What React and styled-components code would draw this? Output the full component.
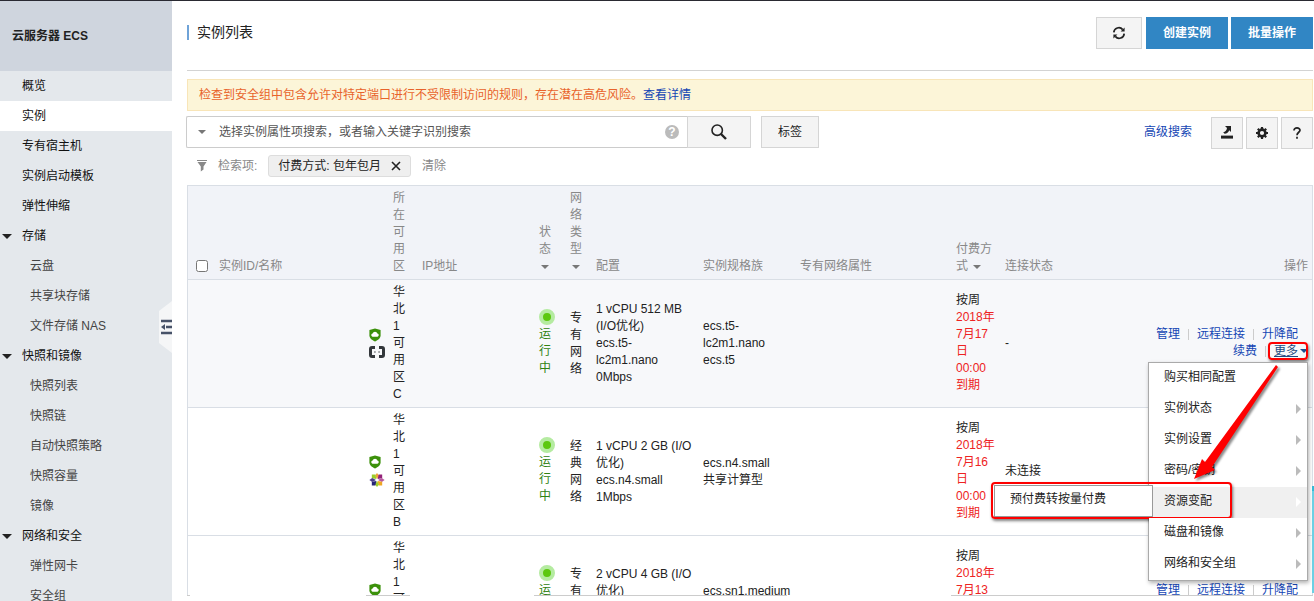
import React from 'react'
import styled, { createGlobalStyle } from 'styled-components'

const menu = [
    { label: '概览' },
    { label: '实例', active: true },
    { label: '专有宿主机' },
    { label: '实例启动模板' },
    { label: '弹性伸缩' },
    { label: '存储', group: true },
    { label: '云盘', sub: true },
    { label: '共享块存储', sub: true },
    { label: '文件存储 NAS', sub: true },
    { label: '快照和镜像', group: true },
    { label: '快照列表', sub: true },
    { label: '快照链', sub: true },
    { label: '自动快照策略', sub: true },
    { label: '快照容量', sub: true },
    { label: '镜像', sub: true },
    { label: '网络和安全', group: true },
    { label: '弹性网卡', sub: true },
    { label: '安全组', sub: true },
]

const instances = [
    {
        id: 'a', os: 'alios', zone: '华北 1 可用区 C', network: '专有网络',
        config: ['1 vCPU 512 MB (I/O优化)', 'ecs.t5-lc2m1.nano', '0Mbps'],
        family: ['ecs.t5-lc2m1.nano', 'ecs.t5'],
        expire: '2018年7月17日 00:00到期', connection: '-', open: true,
    },
    {
        id: 'b', os: 'centos', zone: '华北 1 可用区 B', network: '经典网络',
        config: ['1 vCPU 2 GB (I/O优化)', 'ecs.n4.small', '1Mbps'],
        family: ['ecs.n4.small', '共享计算型'],
        expire: '2018年7月16日 00:00到期', connection: '未连接',
    },
    {
        id: 'c', os: 'centos', zone: '华北 1 可用区 B', network: '专有网络',
        config: ['2 vCPU 4 GB (I/O优化)', 'ecs.sn1.medium', '1Mbps'],
        family: ['ecs.sn1.medium', '计算型 sn1'],
        expire: '2018年7月13日 00:00到期', connection: '',
    },
]

const actions = [
    { label: '购买相同配置' },
    { label: '实例状态', more: true },
    { label: '实例设置', more: true },
    { label: '密码/密钥', more: true },
    { label: '资源变配', more: true, active: true },
    { label: '磁盘和镜像', more: true },
    { label: '网络和安全组', more: true },
]

const ShieldIcon = () => (
    <svg width="12" height="14" viewBox="0 0 12 14" aria-hidden="true">
        <path d="M6 0.6 11.6 2v5.2c0 3-2.6 4.8-5.6 6.2C3 12 0.4 10.2 0.4 7.2V2z" fill="#3c910b" />
        <path d="M3.5 8.8a1.7 1.7 0 0 1 .1-3.3 2.5 2.5 0 0 1 4.8 0 1.7 1.7 0 0 1 .1 3.3z" fill="#fff" />
    </svg>
)

const AliIcon = () => (
    <svg width="16" height="12" viewBox="0 0 16 12" aria-hidden="true">
        <path d="M6 1.5H3Q1.500 1.500 1.500 3v6q0 1.500 1.500 1.500h3M10 1.500h3q1.500 0 1.500 1.500v6q0 1.500-1.500 1.500h-3" fill="none" stroke="#33373b" strokeWidth="3" />
        <path d="M5 6h1.8M9.2 6H11" stroke="#8a8d90" strokeWidth="1.6" />
    </svg>
)

const CentosIcon = () => (
    <svg width="16" height="14" viewBox="0 0 16 14" aria-hidden="true">
        <path d="M8 0 10 2.6 8 6 6 2.6z" fill="#f0a13a" />
        <path d="M2.8 1.6h3.6L7.4 6 2.8 5.2z" fill="#9ccd2a" />
        <path d="M9.6 1.6h3.6v3.6L8.6 6z" fill="#932279" />
        <path d="M15.6 7l-2.8 2L9 7l3.800-2z" fill="#b65aa0" />
        <path d="M13.200 8.800v3.600H9.600L8.600 8z" fill="#efa724" />
        <path d="M8 14l-2-2.600L8 8l2 3.400z" fill="#9ccd2a" />
        <path d="M2.800 12.400V8.800L7.400 8l-1 4.400z" fill="#262577" />
        <path d="M.4 7l2.800-2L7 7 3.200 9z" fill="#4b3f8c" />
    </svg>
)

const FoldIcon = () => (
    <svg width="13" height="52" viewBox="0 0 13 52" aria-hidden="true">
        <path d="M13 0 0 10v32l13 10z" fill="#f5f6f7" />
        <path d="M2 20h11M7 26h6M2 32h11" stroke="#475268" strokeWidth="2.4" />
        <path d="M6 23v6L2 26z" fill="#475268" />
    </svg>
)

const App = () => {
    return (
        <Page>
            <GlobalStyle />
            <Sidebar>
                <Product>云服务器 ECS</Product>
                <nav>
                    {menu.map((item) => (
                        <NavLink key={item.label} href="#" $active={item.active} $sub={item.sub}>
                            {item.group && <GroupArrow />}
                            {item.label}
                        </NavLink>
                    ))}
                </nav>
                <Fold type="button" aria-label="收起"><FoldIcon /></Fold>
            </Sidebar>

            <Main>
                <Header>
                    <Title>实例列表</Title>
                    <Refresh type="button" aria-label="刷新">
                        <svg width="14" height="14" viewBox="0 0 14 14" fill="none" stroke="#222" strokeWidth="1.7">
                            <path d="M1.8 6.4A5 5 0 0 1 10.7 3.6M12.2 7.6A5 5 0 0 1 3.3 10.4" />
                            <path d="M12.600 1.400v4H8.600zM1.400 12.600v-4h4z" fill="#222" stroke="none" />
                        </svg>
                    </Refresh>
                    <Primary type="button">创建实例</Primary>
                    <Primary type="button">批量操作</Primary>
                </Header>

                <Alert>
                    检查到安全组中包含允许对特定端口进行不受限制访问的规则，存在潜在高危风险。<Link href="#">查看详情</Link>
                </Alert>

                <Toolbar>
                    <SearchBox>
                        <Caret />
                        <SearchInput aria-label="搜索" placeholder="选择实例属性项搜索，或者输入关键字识别搜索" />
                        <Help>?</Help>
                    </SearchBox>
                    <SearchButton type="button" aria-label="搜索">
                        <svg width="16" height="16" viewBox="0 0 16 16" fill="none" stroke="#222">
                            <circle cx="6.2" cy="6.2" r="5.2" strokeWidth="1.6" />
                            <path d="M10 10l5 5" strokeWidth="2.4" />
                        </svg>
                    </SearchButton>
                    <TagButton type="button">标签</TagButton>
                    <Advanced href="#">高级搜索</Advanced>
                    <IconGroup>
                        <IconButton type="button" aria-label="导出">
                            <svg width="12" height="13" viewBox="0 0 12 13" fill="#222">
                                <path d="M4 0h6v6L8.200 4.200Q7 7.400 3.600 7.800L2.200 6.200Q5.600 5.400 6 2z" />
                                <path d="M0 9.6h12v3H0z" />
                            </svg>
                        </IconButton>
                        <IconButton type="button" aria-label="设置">
                            <svg width="12" height="12" viewBox="0 0 12 12">
                                <circle cx="6" cy="6" r="3.4" fill="none" stroke="#222" strokeWidth="2.6" />
                                <path d="M6 0v2M6 10v2M0 6h2M10 6h2M1.8 1.8l1.4 1.4M8.8 8.8l1.4 1.4M10.2 1.8 8.8 3.2M3.2 8.8l-1.4 1.4" stroke="#222" strokeWidth="2.2" />
                            </svg>
                        </IconButton>
                        <IconButton type="button" aria-label="帮助">
                            <svg width="8" height="12" viewBox="0 0 8 12" fill="none" stroke="#222" strokeWidth="1.7">
                                <path d="M1 3.400C1 1.800 2.200.900 4 .900s3 1 3 2.400C7 5.300 4 5.300 4 8.200M4 9.800v2" />
                            </svg>
                        </IconButton>
                    </IconGroup>
                </Toolbar>

                <Filters>
                    <svg width="10" height="12" viewBox="0 0 10 12" fill="#888" aria-hidden="true">
                        <path d="M0 0h10v1H0zM0.500 2h9L6.500 6.500v3L3.800 11.500V6.500z" />
                    </svg>
                    <span>检索项:</span>
                    <Chip>
                        付费方式: 包年包月
                        <ChipClose type="button" aria-label="移除">
                            <svg width="10" height="10" viewBox="0 0 10 10" stroke="#222" strokeWidth="1.6">
                                <path d="M1 1l8 8M9 1l-8 8" />
                            </svg>
                        </ChipClose>
                    </Chip>
                    <Clear type="button">清除</Clear>
                </Filters>

                <TableArea>
                    <Table>
                        <colgroup>
                            <Col $w={23} />
                            <Col $w={150} />
                            <Col $w={24} />
                            <Col $w={29} />
                            <Col $w={117} />
                            <Col $w={31} />
                            <Col $w={26} />
                            <Col $w={107} />
                            <Col $w={97} />
                            <Col $w={156} />
                            <Col $w={49} />
                            <Col $w={103} />
                            <col />
                        </colgroup>
                        <thead>
                            <tr>
                                <Th><Check type="checkbox" aria-label="全选" /></Th>
                                <Th>实例ID/名称</Th>
                                <Th />
                                <Th>所在可用区</Th>
                                <Th>IP地址</Th>
                                <Th>状态 <SortCaret /></Th>
                                <Th>网络类型 <SortCaret /></Th>
                                <Th>配置</Th>
                                <Th>实例规格族</Th>
                                <Th>专有网络属性</Th>
                                <Th>付费方式 <SortCaret /></Th>
                                <Th>连接状态</Th>
                                <Th $end>操作</Th>
                            </tr>
                        </thead>
                        <tbody>
                            {instances.map((row) => (
                                <Row key={row.id} $open={row.open}>
                                    <Td />
                                    <Td />
                                    <Td>
                                        <Icons>
                                            <ShieldIcon />
                                            {row.os === 'alios' ? <AliIcon /> : <CentosIcon />}
                                        </Icons>
                                    </Td>
                                    <Td>{row.zone}</Td>
                                    <Td />
                                    <Td><Running><Dot />运行中</Running></Td>
                                    <Td>{row.network}</Td>
                                    <Td>{row.config.map((t) => <div key={t}>{t}</div>)}</Td>
                                    <Td>{row.family.map((t) => <div key={t}>{t}</div>)}</Td>
                                    <Td />
                                    <Td>按周<Expire>{row.expire}</Expire></Td>
                                    <Td>{row.connection}</Td>
                                    <Td $end>
                                        <Ops $inset>
                                            <Link href="#">管理</Link><Bar />
                                            <Link href="#">远程连接</Link><Bar />
                                            <Link href="#">升降配</Link>
                                        </Ops>
                                        <Ops>
                                            <Link href="#">续费</Link><Bar />
                                            <More>
                                                <MoreLink href="#" $open={row.open}>更多</MoreLink>
                                                <MoreCaret />
                                                {row.open && <ActionMenu />}
                                            </More>
                                        </Ops>
                                    </Td>
                                </Row>
                            ))}
                        </tbody>
                    </Table>
                </TableArea>
                <BottomBar>
                    <Rule $from={0} $to={3} />
                    <Rule $from={179} $to={223} />
                    <Rule $from={347} $to={600} />
                    <Rule $from={764} $to={1126} />
                </BottomBar>
            </Main>
            <Feedback />
        </Page>
    )
}

const ActionMenu = () => (
    <>
        <MoreMark />
        <Dropdown>
            {actions.map((item) => (
                <Action key={item.label} $active={item.active}>
                    <ActionButton type="button">{item.label}</ActionButton>
                    {item.more && <Chevron $active={item.active} />}
                    {item.active && (
                        <>
                            <SubMenu><ActionButton type="button">预付费转按量付费</ActionButton></SubMenu>
                            <SubMark />
                        </>
                    )}
                </Action>
            ))}
            <Arrow width="100" height="130" viewBox="0 0 100 130" aria-hidden="true">
                <path d="M93 8 27 108l3 3-21 9 8-20 3 3L91 6z" fill="#fe0000" />
            </Arrow>
        </Dropdown>
    </>
)

const GlobalStyle = createGlobalStyle`
* {
box-sizing:border-box;
}

body {
margin:0;
font-family:"Liberation Sans", "Noto Sans CJK SC", sans-serif;
font-size:12px;
line-height:17px;
color:#222;
background:#fff;
}

button, input {
font-family:inherit;
font-size:inherit;
line-height:inherit;
color:inherit;
}

button {
cursor:pointer;
}

a {
text-decoration:none;
}
`

const Page = styled.div`
display:flex;
height:100vh;
overflow:hidden;
border-top:1px solid #2a2a32;
`

const Sidebar = styled.aside`
position:relative;
flex:none;
width:172px;
height:100%;
background:#e4e8ec;
`

const Product = styled.div`
display:flex;
align-items:center;
height:70px;
padding-left:12px;
font-weight:bold;
background:#cfd5de;
`

const NavLink = styled.a`
display:flex;
align-items:center;
position:relative;
height:30px;
padding-left:${(p) => (p.$sub ? '30px' : '22px')};
color:${(p) => (p.$sub ? '#444' : '#111')};
background:${(p) => (p.$active ? '#fff' : 'transparent')};
`

const GroupArrow = styled.i`
position:absolute;
left:2px;
border:5px solid transparent;
border-top-color:#222;
border-bottom:0;
`

const Fold = styled.button`
position:absolute;
right:0;
top:300px;
display:flex;
padding:0;
border:0;
background:none;
`

const Main = styled.main`
display:flex;
flex-direction:column;
flex:1;
min-width:0;
padding:0 1px 0 15px;
`

const Header = styled.header`
display:flex;
flex:none;
align-items:flex-start;
height:70px;
padding-top:16px;
border-bottom:1px solid #d3d3d3;
`

const Title = styled.h1`
flex:1;
margin:8px 0 0;
padding-left:8px;
border-left:2px solid #6fa3d8;
font-size:14px;
font-weight:normal;
line-height:15px;
`

const Button = styled.button`
display:flex;
align-items:center;
justify-content:center;
height:32px;
padding:0;
border:1px solid #d5d5d5;
background:#f4f4f4;
`

const Refresh = styled(Button)`
width:46px;
margin-right:4px;
`

const Primary = styled(Button)`
width:82px;
border:0;
font-weight:bold;
color:#fff;
background:#3186c4;

& + & {
margin-left:3px;
}
`

const Link = styled.a`
color:#1446b4;
`

const Alert = styled.div`
flex:none;
margin-top:8px;
padding:7px 11px 6px;
border:1px solid #f8e5b8;
color:#e8632b;
background:#fcf5d8;
`

const Toolbar = styled.div`
display:flex;
flex:none;
align-items:center;
margin-top:5px;
`

const SearchBox = styled.div`
display:flex;
align-items:center;
width:501px;
height:32px;
padding:0 8px 0 11px;
margin-left:-1px;
border:1px solid #ccc;
border-right:0;
border-radius:2px 0 0 2px;
`

const Caret = styled.i`
flex:none;
border:4px solid transparent;
border-top-color:#777;
border-bottom:0;
`

const SearchInput = styled.input`
flex:1;
min-width:0;
height:28px;
padding:0 0 0 13px;
border:0;
outline:0;
background:none;

&::placeholder {
color:#555;
opacity:1;
}
`

const Help = styled.span`
width:14px;
height:14px;
border-radius:50%;
font-weight:bold;
line-height:14px;
text-align:center;
color:#fff;
background:#bbb;
`

const SearchButton = styled(Button)`
width:64px;
`

const TagButton = styled(Button)`
width:58px;
margin-left:10px;
`

const Advanced = styled(Link)`
margin-left:auto;
margin-right:19px;
`

const IconGroup = styled.div`
display:flex;
gap:3px;
margin-bottom:-1px;
`

const IconButton = styled(Button)`
width:32px;
`

const Filters = styled.div`
display:flex;
flex:none;
align-items:center;
gap:11px;
margin:7px 0 8px;
padding-left:10px;
color:#888;
`

const Chip = styled.span`
display:flex;
align-items:center;
height:22px;
padding:0 9px;
border:1px solid #ddd;
border-radius:3px;
color:#222;
background:#efefef;
`

const ChipClose = styled.button`
display:flex;
margin-left:10px;
padding:0;
border:0;
background:none;
`

const Clear = styled.button`
padding:0;
border:0;
background:none;
`

const TableArea = styled.div`
flex:1;
min-height:0;
overflow:hidden;
border:1px solid #d9dee5;
border-bottom:0;
`

const Table = styled.table`
width:100%;
table-layout:fixed;
border-collapse:separate;
border-spacing:0;
`

const Col = styled.col`
width:${(p) => p.$w}px;
`

const Th = styled.th`
padding:4px 2px 4px 8px;
padding-right:${(p) => (p.$end ? '4px' : '2px')};
border-bottom:1px solid #d9dee5;
font-weight:normal;
text-align:${(p) => (p.$end ? 'right' : 'left')};
vertical-align:bottom;
color:#888;
background:#f1f3f8;
`

const Check = styled.input`
display:block;
width:12px;
height:12px;
margin:0 0 3px;
`

const SortCaret = styled(Caret)`
display:inline-block;
margin:0 2px;
vertical-align:1px;
`

const Row = styled.tr`
background:${(p) => (p.$open ? '#f7f8fa' : '#fff')};
`

const Td = styled.td`
padding:4px 2px 4px 8px;
padding-right:${(p) => (p.$end ? '4px' : '2px')};
border-bottom:1px solid #d9dee5;
vertical-align:middle;
`

const Icons = styled.div`
display:flex;
flex-direction:column;
gap:4px;
padding-bottom:2px;
`

const Running = styled.div`
padding-bottom:1px;
color:#2f8211;
`

const Dot = styled.i`
display:block;
width:16px;
height:16px;
margin-bottom:1px;
border:4px solid #b5eba1;
border-radius:50%;
background:#5cc80f;
`

const Expire = styled.div`
padding-bottom:1px;
color:#e22;
`

const Ops = styled.div`
display:flex;
justify-content:flex-end;
padding-right:${(p) => (p.$inset ? '10px' : '0')};

&:last-child {
margin-bottom:2px;
}
`

const Bar = styled.i`
width:1px;
height:11px;
margin:3px 8px;
background:#ccc;
`

const More = styled.span`
display:flex;
align-items:center;
position:relative;
`

const MoreLink = styled(Link)`
color:${(p) => (p.$open ? '#244a80' : '#1446b4')};
text-decoration:${(p) => (p.$open ? 'underline' : 'none')};
`

const MoreCaret = styled(Caret)`
margin-left:2px;
border-top-color:#1b4f90;
`

const Mark = styled.div`
position:absolute;
border:2px solid #fe0000;
border-radius:4px;
box-shadow:1px 2px 3px rgba(0,0,0,.5);
pointer-events:none;
`

const MoreMark = styled(Mark)`
top:-1px;
bottom:0;
left:-6px;
right:0;
`

const Dropdown = styled.ul`
position:absolute;
z-index:2;
top:100%;
right:0;
width:160px;
margin:2px 0 0;
padding:0;
border:1px solid #aaa;
list-style:none;
background:#fff;
box-shadow:1px 2px 4px rgba(0,0,0,.3);
`

const Action = styled.li`
display:flex;
align-items:center;
position:relative;
height:31px;
background:${(p) => (p.$active ? '#f0f0f0' : '#fff')};
`

const ActionButton = styled.button`
flex:1;
padding:0 0 2px 15px;
border:0;
text-align:left;
background:none;
`

const Chevron = styled.i`
margin-right:6px;
border:5px solid transparent;
border-left-color:${(p) => (p.$active ? '#fff' : '#bbb')};
border-right:0;
`

const SubMenu = styled.div`
display:flex;
align-items:center;
position:absolute;
top:-2px;
right:154px;
width:159px;
height:32px;
border:1px solid #999;
background:#fff;
`

const SubMark = styled(Mark)`
top:-5px;
right:75px;
width:241px;
height:37px;
`

// red pointer from the link to the highlighted entry
const Arrow = styled.svg`
position:absolute;
top:-4px;
left:36px;
filter:drop-shadow(2px 2px 1px rgba(0,0,0,.45));
pointer-events:none;
`

const BottomBar = styled.div`
position:relative;
flex:none;
height:6px;
`

const Rule = styled.i`
position:absolute;
top:0;
left:${(p) => (p.$from / 1126) * 100}%;
width:${(p) => ((p.$to - p.$from) / 1126) * 100}%;
height:1px;
background:#ccc;
`

const Feedback = styled.div`
position:fixed;
right:0;
bottom:8px;
width:2px;
height:107px;
border-top:5px solid #35b9d6;
background:#6cd0e4;
`

export default App
